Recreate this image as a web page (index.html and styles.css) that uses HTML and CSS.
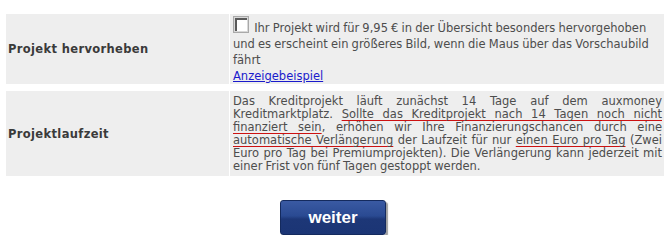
FILE: index.html
```html
<!DOCTYPE html>
<html lang="de">
<head>
<meta charset="utf-8">
<title>Projekt</title>
<link rel="stylesheet" href="styles.css">
</head>
<body>
<div class="page">
  <div class="row row-feature">
    <div class="label">Projekt hervorheben</div>
    <div class="value value-feature"><span class="checkbox"><span class="checkbox-inner"></span></span> Ihr Projekt wird für 9,95 € in der Übersicht besonders hervorgehoben und es erscheint ein größeres Bild, wenn die Maus über das Vorschaubild fährt<br><a href="#" class="link">Anzeigebeispiel</a></div>
  </div>
  <div class="row row-duration">
    <div class="label">Projektlaufzeit</div>
    <div class="value value-duration">Das Kreditprojekt läuft zunächst 14 Tage auf dem auxmoney Kreditmarktplatz. <span class="mark">Sollte das Kreditprojekt nach 14 Tagen noch nicht finanziert sein</span>, erhöhen wir Ihre Finanzierungschancen durch eine <span class="mark">automatische Verlängerung</span> der Laufzeit für nur <span class="mark">einen Euro pro Tag</span> (Zwei Euro pro Tag bei Premiumprojekten). Die Verlängerung kann jederzeit mit einer Frist von fünf Tagen gestoppt werden.</div>
  </div>
  <div class="actions"><button class="btn" type="button">weiter</button></div>
</div>
</body>
</html>
```
FILE: styles.css
```css
html, body {
  margin: 0;
  padding: 0;
  background: #ffffff;
}
body {
  font-family: "DejaVu Sans", Verdana, sans-serif;
  font-size: 11.5px;
  color: #4d4d4d;
}
.page {
  width: 658px;
  padding: 14px 0 0 6px;
}
.row {
  display: flex;
  gap: 1px;
}
.row + .row {
  margin-top: 7px;
}
.label {
  width: 221px;
  flex: none;
  padding-left: 2px;
  display: flex;
  align-items: center;
  background: #eeeeee;
  font-weight: bold;
  letter-spacing: 0.35px;
  color: #3a3a3a;
}
.value {
  flex: 1;
  background: #eeeeee;
  letter-spacing: 0;
  word-spacing: -0.5px;
}
.value-feature {
  padding: 1px 2px 0 3px;
  line-height: 16px;
}
.value-duration {
  padding: 4px 2px 3px 3px;
  line-height: 13px;
  text-align: justify;
}
.checkbox {
  display: inline-block;
  box-sizing: border-box;
  width: 16px;
  height: 17px;
  margin: 1px 2px 3px 0;
  vertical-align: -4px;
  border: 1px solid #a9a9a9;
  background: #d8d8d8;
  padding: 1px;
}
.checkbox-inner {
  display: block;
  box-sizing: border-box;
  width: 100%;
  height: 100%;
  border-top: 2px solid #5a5a5a;
  border-left: 2px solid #5a5a5a;
  background: #ffffff;
}
.link {
  color: #1a1acc;
  text-decoration: underline;
}
.mark {
  text-decoration: underline;
  text-decoration-color: #cc1111;
  text-underline-offset: 2px;
}
.actions {
  display: flex;
  justify-content: center;
  padding-right: 4px;
  margin-top: 24px;
}
.btn {
  width: 106px;
  height: 35px;
  border: 1px solid #142a5e;
  border-radius: 3px;
  background: linear-gradient(#3a5aa3 0%, #2a4a92 45%, #1d3777 55%, #1b3575 100%);
  box-shadow: 2px 2px 1px #a0a0a0;
  color: #ffffff;
  font-family: "Liberation Sans", Arial, sans-serif;
  font-weight: bold;
  font-size: 17px;
  padding: 0;
  cursor: pointer;
}
```
